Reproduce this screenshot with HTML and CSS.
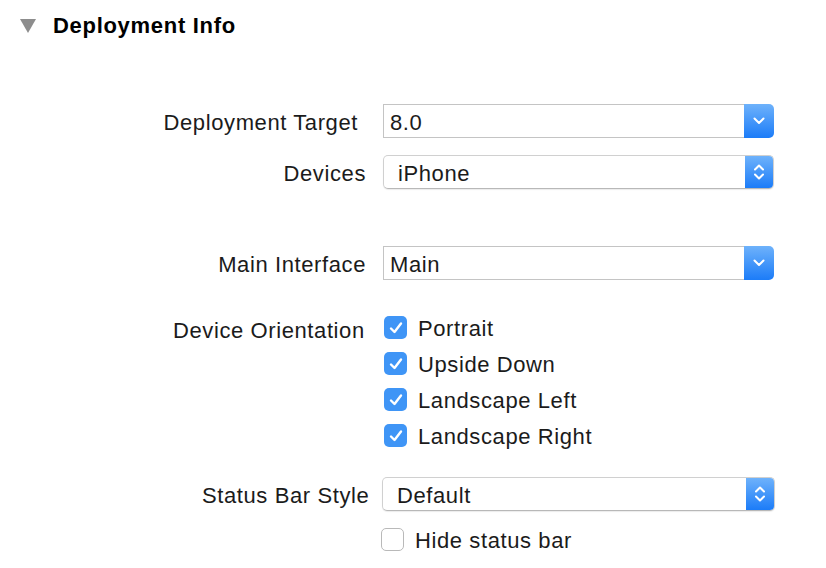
FILE: index.html
```html
<!DOCTYPE html>
<html>
<head>
<meta charset="utf-8">
<link rel="stylesheet" href="styles.css">
</head>
<body>
<div class="page">
  <div class="header">
    <span class="disclosure"></span>
    <h1 class="title">Deployment Info</h1>
  </div>
  <div class="form">
    <div class="row row-target">
      <div class="label label-target">Deployment Target</div>
      <div class="combo">
        <div class="combo-field">8.0</div>
        <div class="combo-btn">
          <svg width="12" height="8" viewBox="0 0 12 8"><path d="M1.5 1.5 L6 6 L10.5 1.5" fill="none" stroke="#fff" stroke-width="2" stroke-linecap="round" stroke-linejoin="round"/></svg>
        </div>
      </div>
    </div>
    <div class="row row-devices">
      <div class="label">Devices</div>
      <div class="popup">
        <div class="popup-field popup-field-iphone">iPhone</div>
        <div class="popup-btn">
          <svg width="12" height="20" viewBox="0 0 12 20"><path d="M2 7.5 L6 3.5 L10 7.5 M2 12.5 L6 16.5 L10 12.5" fill="none" stroke="#fff" stroke-width="2" stroke-linecap="round" stroke-linejoin="round"/></svg>
        </div>
      </div>
    </div>
    <div class="row row-main">
      <div class="label">Main Interface</div>
      <div class="combo">
        <div class="combo-field">Main</div>
        <div class="combo-btn">
          <svg width="12" height="8" viewBox="0 0 12 8"><path d="M1.5 1.5 L6 6 L10.5 1.5" fill="none" stroke="#fff" stroke-width="2" stroke-linecap="round" stroke-linejoin="round"/></svg>
        </div>
      </div>
    </div>
    <div class="row row-orient">
      <div class="label label-orient">Device Orientation</div>
      <div class="checks">
        <div class="check"><span class="box on"><svg width="16" height="14" viewBox="0 0 16 14"><path d="M3 7.5 L6.5 11 L13 2.5" fill="none" stroke="#fff" stroke-width="2.4" stroke-linecap="round" stroke-linejoin="round"/></svg></span><span class="check-text">Portrait</span></div>
        <div class="check"><span class="box on"><svg width="16" height="14" viewBox="0 0 16 14"><path d="M3 7.5 L6.5 11 L13 2.5" fill="none" stroke="#fff" stroke-width="2.4" stroke-linecap="round" stroke-linejoin="round"/></svg></span><span class="check-text">Upside Down</span></div>
        <div class="check"><span class="box on"><svg width="16" height="14" viewBox="0 0 16 14"><path d="M3 7.5 L6.5 11 L13 2.5" fill="none" stroke="#fff" stroke-width="2.4" stroke-linecap="round" stroke-linejoin="round"/></svg></span><span class="check-text">Landscape Left</span></div>
        <div class="check"><span class="box on"><svg width="16" height="14" viewBox="0 0 16 14"><path d="M3 7.5 L6.5 11 L13 2.5" fill="none" stroke="#fff" stroke-width="2.4" stroke-linecap="round" stroke-linejoin="round"/></svg></span><span class="check-text">Landscape Right</span></div>
      </div>
    </div>
    <div class="row row-status">
      <div class="label label-status">Status Bar Style</div>
      <div class="popup popup-status">
        <div class="popup-field">Default</div>
        <div class="popup-btn">
          <svg width="12" height="20" viewBox="0 0 12 20"><path d="M2 7.5 L6 3.5 L10 7.5 M2 12.5 L6 16.5 L10 12.5" fill="none" stroke="#fff" stroke-width="2" stroke-linecap="round" stroke-linejoin="round"/></svg>
        </div>
      </div>
    </div>
    <div class="row row-hide">
      <div class="label"></div>
      <div class="check check-hide"><span class="box off"></span><span class="check-text">Hide status bar</span></div>
    </div>
  </div>
</div>
</body>
</html>
```
FILE: styles.css
```css
* { box-sizing: border-box; }
html, body { margin: 0; padding: 0; background: #fff; }
body {
  font-family: "Liberation Sans", Arial, sans-serif;
  color: #1b1b1b;
  width: 826px;
  height: 568px;
  overflow: hidden;
  letter-spacing: 0.6px;
}
.page { padding-top: 12px; }
.header {
  display: flex;
  align-items: center;
  height: 28px;
  padding-left: 20px;
}
.disclosure {
  width: 0;
  height: 0;
  border-left: 8px solid transparent;
  border-right: 8px solid transparent;
  border-top: 14px solid #8d8d8d;
  margin-right: 17px;
}
.title {
  margin: 0;
  font-size: 22px;
  font-weight: bold;
  letter-spacing: 0.7px;
  color: #000;
}
.form {
  margin-top: 64px;
  display: flex;
  flex-direction: column;
}
.row {
  display: flex;
  align-items: center;
}
.label {
  width: 366px;
  flex: none;
  text-align: right;
  font-size: 22px;
  margin-right: 17px;
  white-space: nowrap;
  padding-top: 3px;
}
.label-target { padding-right: 8px; }
.label-orient { padding-left: 173px; text-align: left; line-height: 23px; }
.row-devices { margin-top: 17px; }
.row-main { margin-top: 57px; }
.row-orient { margin-top: 36px; align-items: flex-start; }
.row-status { margin-top: 30px; }
.label-status {
  margin-right: 11px;
  width: 371px;
  overflow: hidden;
  text-align: left;
  padding-left: 202px;
}
.row-hide { margin-top: 17px; }
.combo {
  width: 391px;
  height: 34px;
  display: flex;
}
.combo-field {
  flex: 1;
  border: 1px solid #c4c4c4;
  border-right: none;
  background: #fff;
  font-size: 22px;
  padding-left: 6px;
  padding-top: 3px;
  display: flex;
  align-items: center;
}
.combo-btn, .popup-btn {
  width: 30px;
  background: linear-gradient(#6eb2fb, #1c7cf8);
  border-radius: 0 5px 5px 0;
  display: flex;
  align-items: center;
  justify-content: center;
}
.popup {
  width: 391px;
  height: 34px;
  display: flex;
  border-radius: 5px;
  border: 1px solid #d0d0d0;
  border-bottom-color: #b8b8b8;
  box-shadow: 0 1px 1px rgba(0,0,0,0.08);
  overflow: hidden;
}
.popup-status { width: 393px; }
.popup-field {
  flex: 1;
  font-size: 22px;
  padding-left: 14px;
  padding-top: 3px;
  display: flex;
  align-items: center;
}
.popup-btn { width: 28px; border-radius: 0; }
.checks {
  display: flex;
  flex-direction: column;
  gap: 13px;
  padding-left: 1px;
}
.check {
  display: flex;
  align-items: center;
  height: 23px;
  font-size: 22px;
}
.check-text { padding-top: 3px; }
.box {
  width: 23px;
  height: 23px;
  border-radius: 5px;
  margin-right: 11px;
  display: flex;
  align-items: center;
  justify-content: center;
  flex: none;
}
.box.on { background: #3f95f6; }
.box.off { border: 1px solid #b9b9b9; background: #fff; }
.check-hide { margin-left: -2px; }
```
